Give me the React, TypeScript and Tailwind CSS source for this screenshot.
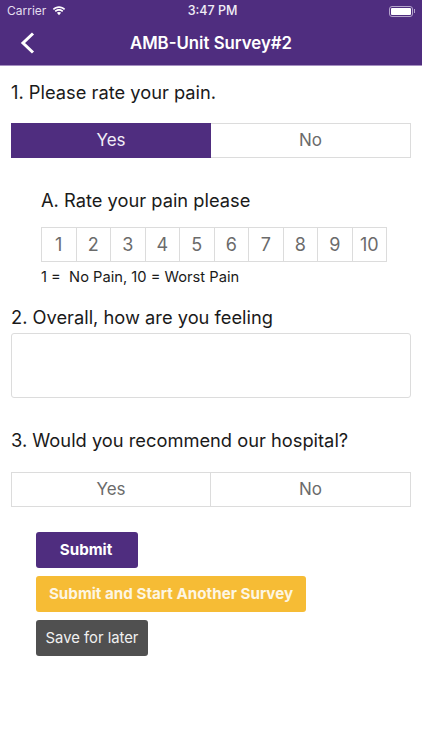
const font = { fontFamily: 'Inter, "Noto Sans", sans-serif' };

function Segment({ active }: { active?: boolean }) {
  return (
    <div className="mx-[11px] flex h-[35px] border border-[#dcdcdc] text-[17px] text-[#6b6b6b]">
      <div
        className={
          active
            ? '-my-px -ml-px flex w-[200px] items-center justify-center bg-[#4f2d7f] text-[#f1edf6]'
            : 'flex w-[199px] items-center justify-center border-r border-[#dcdcdc]'
        }
      >
        Yes
      </div>
      <div className="flex flex-1 items-center justify-center">No</div>
    </div>
  );
}

export default function App() {
  const ratings = [1, 2, 3, 4, 5, 6, 7, 8, 9, 10];

  return (
    <div className="h-[750px] w-[422px] overflow-hidden bg-white" style={font}>
      {/* header */}
      <header className="h-[66px] border-b border-[#a58fc0] bg-[#4f2d7f] text-white">
        <div className="flex h-[22px] items-center justify-between pl-[7px] pr-[7px] text-[12.5px]">
          <div className="flex w-[120px] items-center gap-[6px] text-[#e4deee]">
            <span className="text-[12px]">Carrier</span>
            <svg width="14" height="10" viewBox="0 0 15 11" fill="white">
              <path d="M7.5 2.2c2.2 0 4.1.8 5.6 2.2l1.2-1.3C12.5 1.4 10.1.4 7.5.4S2.5 1.4.7 3.1l1.2 1.3C3.4 3 5.3 2.2 7.5 2.2z" />
              <path d="M7.5 5.2c1.3 0 2.5.5 3.5 1.3l1.2-1.3C11 4.1 9.3 3.4 7.5 3.4s-3.5.7-4.7 1.8L4 6.5c1-.8 2.2-1.3 3.5-1.3z" />
              <path d="M7.5 6.6c-.9 0-1.7.3-2.3.9l2.3 2.6 2.3-2.6c-.6-.6-1.4-.9-2.3-.9z" />
            </svg>
          </div>
          <span className="ml-[3px] font-medium text-[#f1edf6]">3:47 PM</span>
          <div className="flex w-[120px] items-center justify-end gap-[1px]">
            <div className="h-[11px] w-[24px] rounded-[3px] border border-[#b5a5cc] p-[1px]">
              <div className="h-full w-full rounded-[1px] bg-white" />
            </div>
            <div className="h-[4px] w-[1px] bg-[#b5a5cc]" />
          </div>
        </div>
        <div className="relative flex h-[43px] items-center justify-center">
          <svg
            className="absolute left-[20px] top-[10px]"
            width="15"
            height="22"
            viewBox="0 0 15 22"
            fill="none"
            stroke="white"
            strokeWidth="3"
          >
            <path d="M13 1.5 3 11l10 9.5" />
          </svg>
          <h1 className="text-[16.8px] font-semibold">AMB-Unit Survey#2</h1>
        </div>
      </header>

      {/* question 1 */}
      <p className="ml-[11px] mt-[15px] text-[18.3px] leading-[22px] text-[#1a1a1a]">1. Please rate your pain.</p>
      <div className="mt-[20px]">
        <Segment active />
      </div>

      <p className="ml-[41px] mt-[31px] text-[18.3px] leading-[22px] text-[#1a1a1a]">A. Rate your pain please</p>
      <div className="ml-[41px] mt-[16px] flex h-[35px] w-[346px] border border-[#dcdcdc] text-[18px] text-[#6b6b6b]">
        {ratings.map((n) => (
          <div key={n} className="flex flex-1 items-center justify-center border-r border-[#dcdcdc] last:border-r-0">
            {n}
          </div>
        ))}
      </div>
      <p className="ml-[41px] mt-[6px] text-[14.7px] leading-[18px] text-[#1a1a1a]">1 =&nbsp; No Pain, 10 = Worst Pain</p>

      {/* question 2 */}
      <p className="ml-[11px] mt-[20px] text-[18.3px] leading-[22px] text-[#1a1a1a]">2. Overall, how are you feeling</p>
      <div className="mx-[11px] mt-[5px] h-[65px] rounded-[3px] border border-[#dcdcdc]" />

      {/* question 3 */}
      <p className="ml-[11px] mt-[31px] text-[18.3px] leading-[22px] text-[#1a1a1a]">3. Would you recommend our hospital?</p>
      <div className="mt-[21px]">
        <Segment />
      </div>

      <div className="ml-[36px] mt-[25px] flex flex-col items-start gap-2 text-[15.2px]">
        <button className="flex h-[36px] w-[102px] items-center justify-center rounded-[3px] bg-[#4f2d7f] pr-[2px] font-bold text-white">
          Submit
        </button>
        <button className="flex h-[36px] w-[270px] items-center justify-center rounded-[3px] bg-[#f6bc35] font-bold text-[#fdf6e3]">
          Submit and Start Another Survey
        </button>
        <button className="flex h-[36px] w-[112px] items-center justify-center rounded-[3px] bg-[#505050] text-[14.8px] text-[#f0f0f0]">
          Save for later
        </button>
      </div>
    </div>
  );
}
